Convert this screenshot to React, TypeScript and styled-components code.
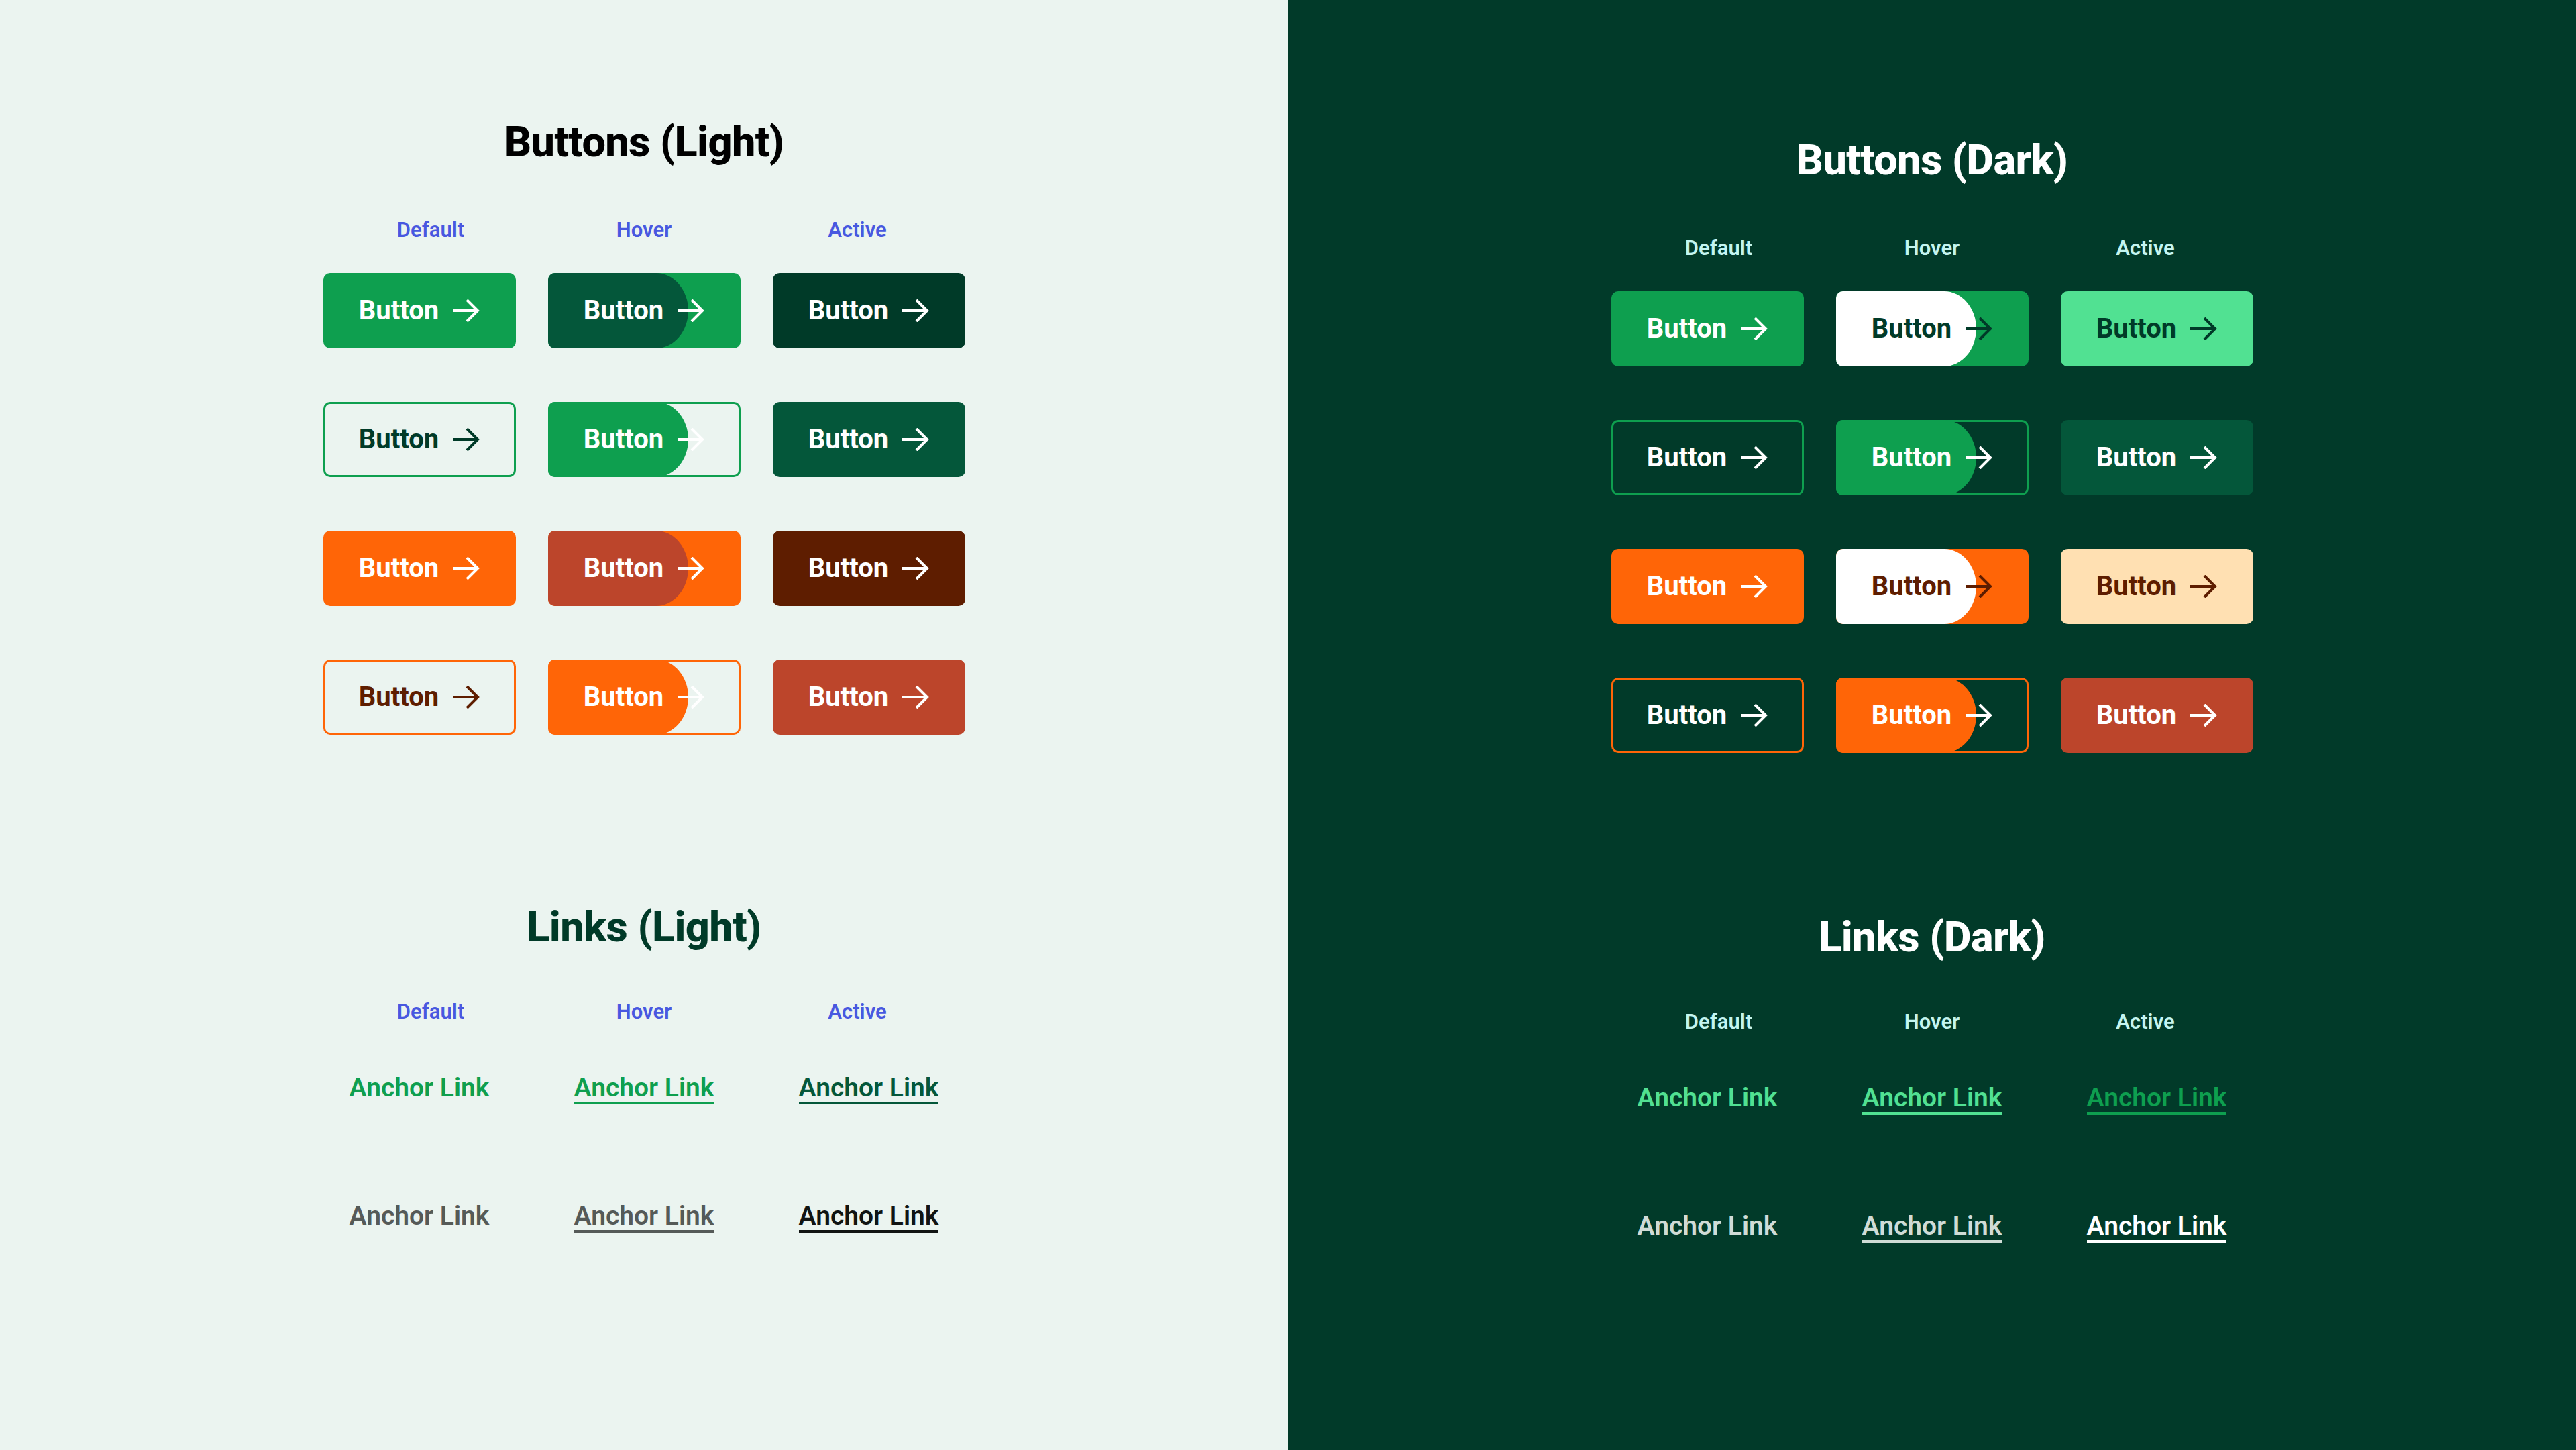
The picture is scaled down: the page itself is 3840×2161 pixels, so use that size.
import * as React from 'react';
import styled, { createGlobalStyle } from 'styled-components';

const GREEN = '#0e9f4f';
const DEEP = '#04573a';
const FOREST = '#003a28';
const MINT = '#51e192';
const ORANGE = '#ff6507';
const RUST = '#bc452b';
const BROWN = '#5e1d00';
const PEACH = '#ffe0b2';
const WHITE = '#ffffff';

const GlobalStyle = createGlobalStyle`
  html, body {
    margin: 0;
    padding: 0;
  }
  body {
    font-family: Roboto, "Liberation Sans", sans-serif;
  }
`;

const Page = styled.div`
  display: grid;
  grid-template-columns: 1920px 1920px;
  width: 3840px;
  height: 2161px;
  overflow: hidden;
`;

const Panel = styled.div<{ $bg: string; $top: number }>`
  display: flex;
  flex-direction: column;
  align-items: center;
  padding-top: ${(p) => p.$top}px;
  background: ${(p) => p.$bg};
`;

const Section = styled.section<{ $mt?: number }>`
  display: flex;
  flex-direction: column;
  align-items: center;
  margin-top: ${(p) => p.$mt || 0}px;
`;

const Title = styled.h2<{ $color: string }>`
  margin: 0;
  font-size: 63px;
  font-weight: 800;
  line-height: 1;
  letter-spacing: -0.6px;
  color: ${(p) => p.$color};
`;

const LabelRow = styled.div<{ $mt: number }>`
  display: grid;
  grid-template-columns: repeat(3, 270px);
  column-gap: 48px;
  margin-top: ${(p) => p.$mt}px;
`;

const Label = styled.div<{ $color: string }>`
  font-size: 31px;
  font-weight: 600;
  line-height: 1;
  text-align: center;
  color: ${(p) => p.$color};
`;

const ButtonGrid = styled.div`
  display: grid;
  grid-template-columns: repeat(3, 287px);
  column-gap: 48px;
  row-gap: 80px;
  margin-top: 49px;
`;

const Btn = styled.button<{ $bg: string; $border: string }>`
  position: relative;
  display: flex;
  align-items: center;
  justify-content: center;
  height: 112px;
  box-sizing: border-box;
  padding: 0;
  border: 3px solid ${(p) => p.$border};
  border-radius: 10px;
  background: ${(p) => p.$bg};
  cursor: pointer;
`;

const HoverFill = styled.span<{ $bg: string }>`
  position: absolute;
  top: -3px;
  bottom: -3px;
  left: -3px;
  width: 209px;
  border-radius: 10px 48px 48px 10px / 10px 56px 56px 10px;
  background: ${(p) => p.$bg};
`;

const BtnContent = styled.span<{ $color: string }>`
  position: relative;
  display: flex;
  align-items: center;
  gap: 21px;
  font-family: Roboto, "Liberation Sans", sans-serif;
  font-size: 40px;
  font-weight: 700;
  line-height: 1;
  color: ${(p) => p.$color};
`;

const LinkGrid = styled.div`
  display: grid;
  grid-template-columns: repeat(3, 287px);
  column-gap: 48px;
  row-gap: 147px;
  justify-items: center;
  margin-top: 79px;
`;

const Anchor = styled.a<{ $color: string; $underline: boolean }>`
  display: inline-block;
  padding-bottom: 1px;
  border-bottom: 4px solid ${(p) => (p.$underline ? p.$color : 'transparent')};
  font-size: 39px;
  font-weight: 600;
  line-height: 1;
  color: ${(p) => p.$color};
  text-decoration: none;
  cursor: pointer;
`;

const Arrow = () => (
  <svg width="40" height="34" viewBox="0 0 40 34" fill="none">
    <path
      d="M0 17H37M21 1L37 17L21 33"
      stroke="currentColor"
      strokeWidth="4"
      strokeLinejoin="miter"
    />
  </svg>
);

type BtnSpec = { bg: string; border?: string; color: string; overlay?: string };
type LinkSpec = { color: string; underline: boolean };

const lightButtons: BtnSpec[] = [
  { bg: GREEN, color: WHITE },
  { bg: GREEN, color: WHITE, overlay: DEEP },
  { bg: FOREST, color: WHITE },
  { bg: 'transparent', border: GREEN, color: FOREST },
  { bg: 'transparent', border: GREEN, color: WHITE, overlay: GREEN },
  { bg: DEEP, color: WHITE },
  { bg: ORANGE, color: WHITE },
  { bg: ORANGE, color: WHITE, overlay: RUST },
  { bg: BROWN, color: WHITE },
  { bg: 'transparent', border: ORANGE, color: BROWN },
  { bg: 'transparent', border: ORANGE, color: WHITE, overlay: ORANGE },
  { bg: RUST, color: WHITE },
];

const darkButtons: BtnSpec[] = [
  { bg: GREEN, color: WHITE },
  { bg: GREEN, color: FOREST, overlay: WHITE },
  { bg: MINT, color: FOREST },
  { bg: 'transparent', border: GREEN, color: WHITE },
  { bg: 'transparent', border: GREEN, color: WHITE, overlay: GREEN },
  { bg: DEEP, color: WHITE },
  { bg: ORANGE, color: WHITE },
  { bg: ORANGE, color: BROWN, overlay: WHITE },
  { bg: PEACH, color: BROWN },
  { bg: 'transparent', border: ORANGE, color: WHITE },
  { bg: 'transparent', border: ORANGE, color: WHITE, overlay: ORANGE },
  { bg: RUST, color: WHITE },
];

const lightLinks: LinkSpec[] = [
  { color: GREEN, underline: false },
  { color: GREEN, underline: true },
  { color: DEEP, underline: true },
  { color: '#555a58', underline: false },
  { color: '#555a58', underline: true },
  { color: '#111413', underline: true },
];

const darkLinks: LinkSpec[] = [
  { color: MINT, underline: false },
  { color: MINT, underline: true },
  { color: GREEN, underline: true },
  { color: '#d0dcd6', underline: false },
  { color: '#d0dcd6', underline: true },
  { color: WHITE, underline: true },
];

const states = ['Default', 'Hover', 'Active'];

interface IBoardProps {
  mode: string;
  bg: string;
  top: number;
  linksTop: number;
  heading: string;
  linkHeading: string;
  label: string;
  buttons: BtnSpec[];
  links: LinkSpec[];
}

const Board: React.FunctionComponent<IBoardProps> = (props) => {
  return (
    <Panel $bg={props.bg} $top={props.top}>
      <Section>
        <Title $color={props.heading}>Buttons ({props.mode})</Title>
        <LabelRow $mt={84}>
          {states.map((s) => (
            <Label key={s} $color={props.label}>{s}</Label>
          ))}
        </LabelRow>
        <ButtonGrid>
          {props.buttons.map((b, i) => (
            <Btn key={i} $bg={b.bg} $border={b.border || b.bg}>
              {b.overlay && <HoverFill $bg={b.overlay} />}
              <BtnContent $color={b.color}>
                Button
                <Arrow />
              </BtnContent>
            </Btn>
          ))}
        </ButtonGrid>
      </Section>

      <Section $mt={props.linksTop}>
        <Title $color={props.linkHeading}>Links ({props.mode})</Title>
        <LabelRow $mt={79}>
          {states.map((s) => (
            <Label key={s} $color={props.label}>{s}</Label>
          ))}
        </LabelRow>
        <LinkGrid>
          {props.links.map((l, i) => (
            <Anchor key={i} $color={l.color} $underline={l.underline}>
              Anchor Link
            </Anchor>
          ))}
        </LinkGrid>
      </Section>
    </Panel>
  );
};

const App: React.FunctionComponent = () => {
  return (
    <>
      <GlobalStyle />
      <Page>
        <Board
          mode="Light"
          bg="#ebf4f0"
          top={180}
          linksTop={255}
          heading="#000000"
          linkHeading={FOREST}
          label="#4858e0"
          buttons={lightButtons}
          links={lightLinks}
        />
        <Board
          mode="Dark"
          bg="#013a29"
          top={207}
          linksTop={243}
          heading={WHITE}
          linkHeading={WHITE}
          label="#c4f5f0"
          buttons={darkButtons}
          links={darkLinks}
        />
      </Page>
    </>
  );
};

export default App;
